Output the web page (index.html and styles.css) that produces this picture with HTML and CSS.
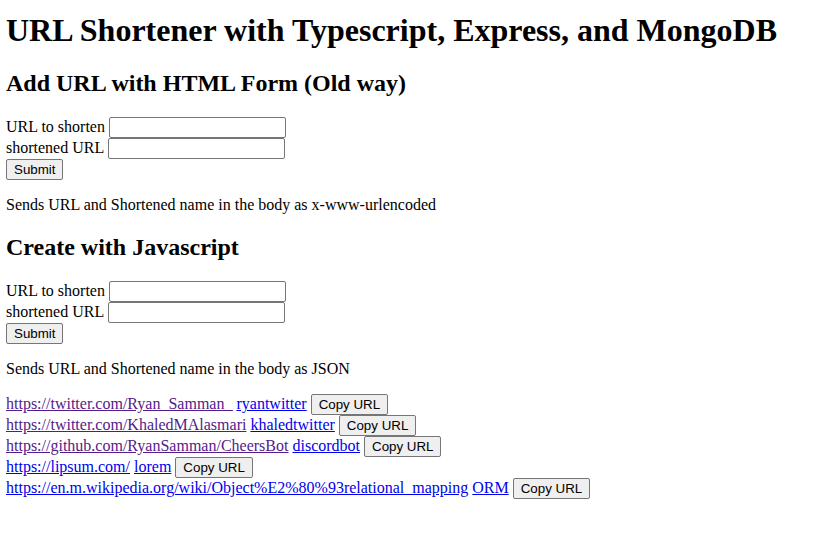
FILE: index.html
```html
<!DOCTYPE html>
<html lang="en">
<head>
<meta charset="utf-8">
<title>URL Shortener</title>
<link rel="stylesheet" href="styles.css">
</head>
<body>
<h1>URL Shortener with Typescript, Express, and MongoDB</h1>

<h2>Add URL with HTML Form (Old way)</h2>
<form class="url-form">
  <div class="row"><label for="form-url">URL to shorten</label> <input class="field" id="form-url" type="text"></div>
  <div class="row"><label for="form-short">shortened URL</label> <input class="field" id="form-short" type="text"></div>
  <div class="row"><button class="button" type="button">Submit</button></div>
</form>
<p>Sends URL and Shortened name in the body as x-www-urlencoded</p>

<h2>Create with Javascript</h2>
<form class="url-form">
  <div class="row"><label for="js-url">URL to shorten</label> <input class="field" id="js-url" type="text"></div>
  <div class="row"><label for="js-short">shortened URL</label> <input class="field" id="js-short" type="text"></div>
  <div class="row"><button class="button" type="button">Submit</button></div>
</form>
<p>Sends URL and Shortened name in the body as JSON</p>

<div class="links">
  <div class="row"><a class="seen" href="#">https://twitter.com/Ryan_Samman_</a> <a href="#">ryantwitter</a> <button class="button" type="button">Copy URL</button></div>
  <div class="row"><a class="seen" href="#">https://twitter.com/KhaledMAlasmari</a> <a href="#">khaledtwitter</a> <button class="button" type="button">Copy URL</button></div>
  <div class="row"><a class="seen" href="#">https://github.com/RyanSamman/CheersBot</a> <a href="#">discordbot</a> <button class="button" type="button">Copy URL</button></div>
  <div class="row"><a href="#">https://lipsum.com/</a> <a href="#">lorem</a> <button class="button" type="button">Copy URL</button></div>
  <div class="row"><a href="#">https://en.m.wikipedia.org/wiki/Object%E2%80%93relational_mapping</a> <a href="#">ORM</a> <button class="button" type="button">Copy URL</button></div>
</div>
</body>
</html>
```
FILE: styles.css
```css
* {
  box-sizing: border-box;
}

body {
  margin: 12px 6px;
  background: #fff;
  color: #000;
  font: 16px/18px "Liberation Serif", "Times New Roman", serif;
}

h1 {
  margin: 0 0 22px;
  font-size: 32px;
  line-height: 36px;
}

h2 {
  margin: 19px 0 20px;
  font-size: 24px;
  line-height: 27px;
}

p {
  margin: 15px 0;
  line-height: 20px;
}

.row {
  height: 21px;
}

.field,
.button {
  height: 21px;
  margin: 0;
  border: 1px solid #767676;
  border-radius: 2px;
  font-family: "Liberation Sans", Arial, sans-serif;
  line-height: 15px;
}

.field {
  width: 177px;
  padding: 1px 2px;
  background: #fff;
}

.button {
  padding: 1px 7px;
  background: #efefef;
  color: #000;
}

a {
  color: #0000ee;
  text-decoration: underline;
}

.seen {
  color: #551a8b;
}
```
